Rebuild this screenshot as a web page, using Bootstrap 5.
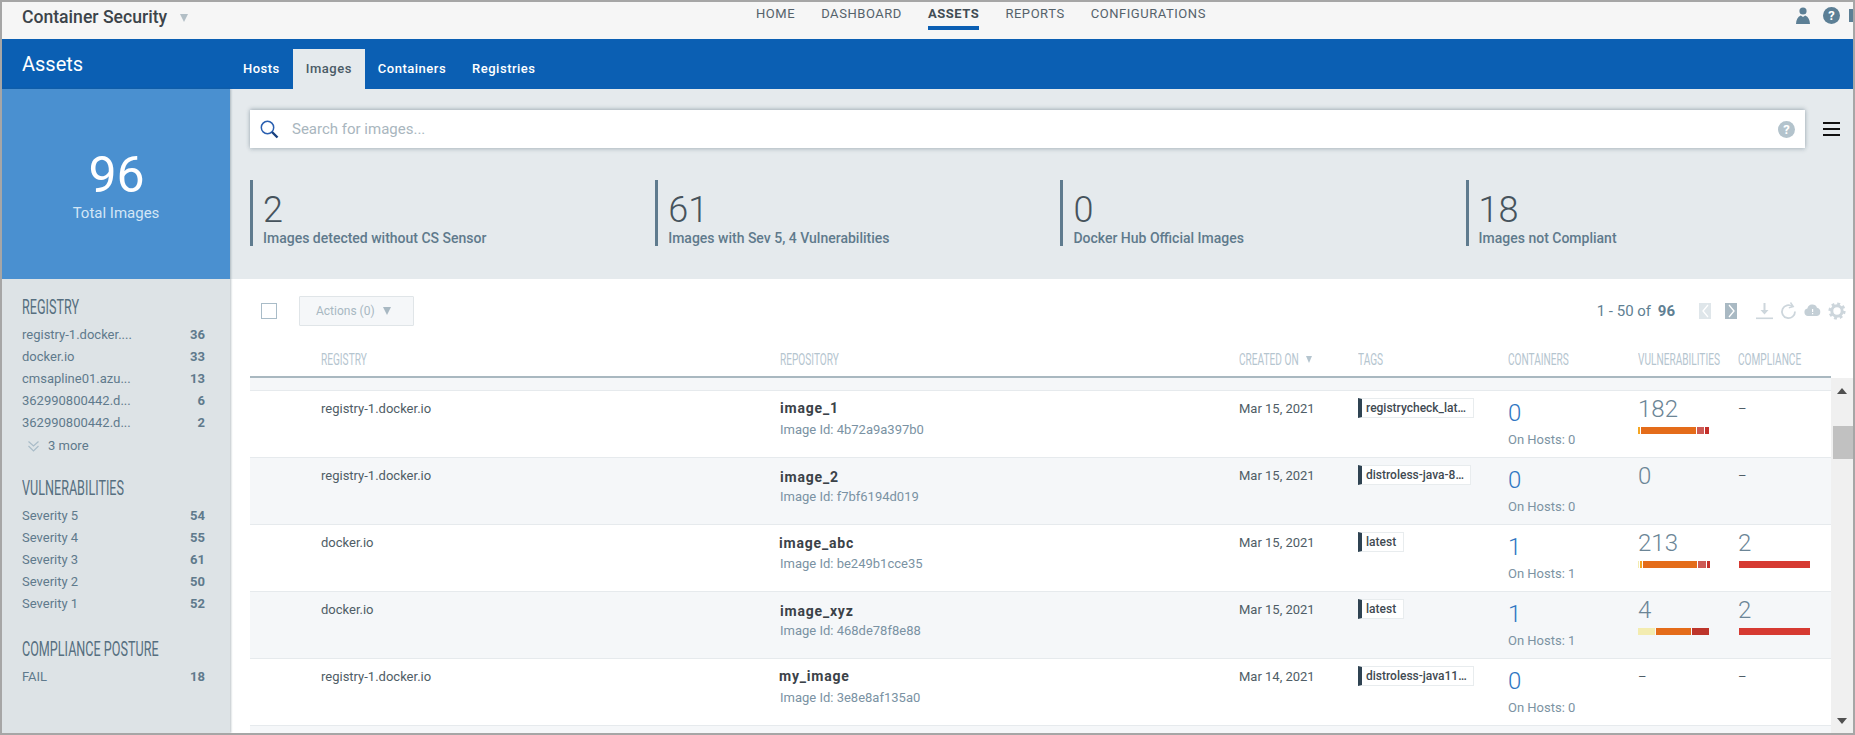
<!DOCTYPE html>
<html lang="en">
<head>
<meta charset="utf-8">
<title>Container Security - Assets</title>
<link href="https://cdn.jsdelivr.net/npm/bootstrap@5.3.0/dist/css/bootstrap.min.css" rel="stylesheet">
<style>
html,body{height:100%;margin:0;overflow:hidden}
body{font-family:Roboto,"Liberation Sans",sans-serif;font-size:13px;color:#4f5d66;background:#fff}
.cs-frame{width:1855px;height:735px;border:2px solid #a6a6a6;display:flex;flex-direction:column;overflow:hidden}
.cs-top{height:37px;background:#f6f6f6;flex:none;overflow:hidden}
.cs-title{width:754px;padding-left:20px;font-size:17.6px;font-weight:500;color:#3c444a;line-height:30px;flex:none}
.cs-caret{display:inline-block;width:0;height:0;border-left:4px solid transparent;border-right:4px solid transparent;border-top:8px solid #b3bfc6;vertical-align:middle}
.cs-title .cs-caret{margin-left:13px;margin-top:-1px}
.cs-mainnav{gap:26px}
.cs-mainnav .nav-link{padding:4px 0 0;height:28px;line-height:16px;font-size:13px;letter-spacing:.55px;color:#55626b;border-bottom:4px solid transparent}
.cs-mainnav .nav-link.active{font-weight:700;color:#414c54;border-bottom-color:#0b5fb3}
.cs-topicons{margin-left:auto;margin-right:-10px;gap:13px;padding-top:5px}
.cs-help{width:17px;height:17px;border-radius:50%;background:#5c7f95;color:#fff;font-size:13px;font-weight:700;line-height:17px;text-align:center;flex:none}
.cs-help-light{background:#b3c3cc}
.cs-box{width:14px;height:13px;background:#5c7f95;margin:2px 0 0 -4px;flex:none}
.cs-blue{height:50px;background:#0b5fb3;flex:none}
.cs-page{width:228px;padding-left:20px;font-size:20px;line-height:50px;color:#fff;flex:none}
.cs-tabs{margin-top:10px}
.cs-tabs .nav-link{height:40px;padding:12px 13px 0;font-size:13px;line-height:16px;font-weight:500;letter-spacing:.5px;color:#fff;border:0;border-radius:0;background:transparent}
.cs-tabs .nav-link.active{background:#e5eaed;color:#4a5b66}
.cs-body{flex:1;min-height:0}
.cs-side{width:228px;flex:none;display:flex;flex-direction:column;box-shadow:1px 0 2px rgba(60,80,95,.35);position:relative;z-index:2}
.cs-total{height:190px;flex:none;background:#4a90d0;color:#fff;text-align:center}
.cs-total-num{font-size:50px;line-height:58px;padding-top:57px;margin-left:1px}
.cs-total-label{font-size:15px;line-height:18px;color:#d3e6f6}
.cs-facets{flex:1;background:#dde3e6;padding:20px 25px 0 20px;color:#5f7a8c}
.cs-fh{height:16px;line-height:16px;font-size:20px;color:#566f80;white-space:nowrap;transform-origin:left center;transform:scaleX(.63);margin-bottom:9px}
.cs-fi{display:flex;justify-content:space-between;height:22px;line-height:22px;font-size:13px}
.cs-fi b{font-weight:700;color:#5f7a8c}
.cs-more{height:24px;line-height:24px;padding-left:6px;display:flex;align-items:center;gap:9px;margin-bottom:22px}
.cs-fgap{margin-top:26px}
.cs-main{flex:1;min-width:0;display:flex;flex-direction:column}
.cs-head{height:190px;flex:none;background:#e5eaed;padding:21px 0 0 20px}
.cs-search{width:1555px;height:38px;background:#fff;box-shadow:0 -1px 4px rgba(90,110,125,.45),0 2px 4px rgba(90,110,125,.2);padding:0 10px}
.cs-search input{border:0;outline:0;flex:1;font:15px Roboto,sans-serif;color:#4f5d66;background:transparent;padding:0;margin-left:13px}
.cs-search input::placeholder{color:#a9b6be;opacity:1}
.cs-burger{width:17px;margin-left:18px;display:flex;flex-direction:column;gap:4px}
.cs-burger span{display:block;height:2px;background:#111}
.cs-stats{margin-top:32px}
.cs-stat{width:405.2px;height:66px;flex:none}
.cs-stat-in{border-left:3px solid #5f7b8e;height:66px;padding:12px 0 0 10px}
.cs-stat-num{font-size:36px;line-height:36px;font-weight:300;color:#46535c}
.cs-stat-label{font-size:14px;line-height:20px;font-weight:500;color:#5f7a8c}
.cs-list{flex:1;min-height:0;display:flex;flex-direction:column;padding-left:20px}
.cs-tool{height:62px;flex:none;padding:17px 7px 0 11px}
.cs-check{width:16px;height:16px;border:1px solid #a9bcc8;margin-top:7px;background:#fff;flex:none;appearance:none;display:block}
.cs-actions{margin-left:22px;width:115px;height:30px;background:#f5f7f9;border:1px solid #e0e5e8;border-radius:1px;color:#a8b8c2;font-size:12px;line-height:28px;padding:0 0 0 16px;text-align:left}
.cs-actions .cs-caret{margin-left:8px;border-top-color:#a8b8c2;margin-top:-2px}
.cs-count{font-size:15px;line-height:30px;color:#5f7f93;margin-left:auto}
.cs-count b{font-weight:700;margin-left:3px}
.cs-pg{width:12px;height:16px;margin-top:7px;display:flex;align-items:center;justify-content:center;flex:none}
.cs-pg-off{background:#dfe6ea;margin-left:24px}
.cs-pg-on{background:#a9b9c3;margin-left:14px}
.cs-ticons{gap:7px;margin-left:19px;margin-top:6px}
table.cs-table{table-layout:fixed;width:1581px;margin:0;border-collapse:collapse;--bs-table-bg:transparent}
.cs-table td,.cs-table th{padding:0;border:0;vertical-align:top;box-shadow:none}
.cs-hdr{flex:none;border-bottom:2px solid #a9b8c0;width:1603px}
.cs-hdr th{height:36px;font-weight:400;line-height:16px;padding-top:10px!important}
.cs-th{display:block;font-size:17px;color:#b5c5cf;white-space:nowrap;transform-origin:left center;transform:scaleX(.595);height:16px}
.cs-sort{display:flex;height:16px}
.cs-sort .cs-th{width:67px;flex:none}
.cs-sort .cs-caret{margin-top:5px;border-top-color:#b5c5cf;border-left-width:3.5px;border-right-width:3.5px;border-top-width:7px}
.cs-scrollarea{flex:1;min-height:0;display:flex}
.cs-rows{flex:1;min-width:0;background:#f5f7f9;padding-top:12px;overflow:hidden}
.cs-rows tr{height:67px;background:#fff}
.cs-rows tr.cs-alt{background:#f5f7f9}
.cs-rows td{border-top:1px solid #e6eaed!important;height:67px}
.cs-rows tr:last-child td{border-bottom:1px solid #e6eaed!important}
.cs-plain{display:block;padding-top:10px;line-height:16px;font-size:13px;color:#4f5d66}
.cs-name{display:block;font-size:14px;font-weight:700;letter-spacing:.8px;line-height:16px;color:#3b4248;padding-top:9px}
.cs-name2{padding-top:11px}
.cs-name3{padding-top:10px;margin-left:-1px}
.cs-name5{margin-left:-1px}
.cs-id{position:relative;display:block;font-size:13px;line-height:16px;color:#7a92a3;margin-top:6px}
.cs-id-up{margin-top:4px}
.cs-id-mid{margin-top:5px}
.cs-tag{display:inline-flex;margin-top:7px;height:20px;border:1px solid #e8ecee;border-left:4px solid #2f4352;background:#fff;font-size:12px;font-weight:500;line-height:18px;color:#3f4a52;padding-left:4px;white-space:nowrap}
.cs-t116{width:116px}.cs-t113{width:113px}.cs-t46{width:46px}
.cs-cnum{display:block;font-size:24px;line-height:24px;font-weight:300;color:#2f76c2;padding-top:10px}
.cs-host{display:block;font-size:13px;line-height:16px;color:#7c93a3;margin-top:7px}
.cs-vnum{display:block;font-size:24px;line-height:24px;font-weight:300;color:#6b8596;padding-top:6px}
.cs-dash{display:block;font-size:13px;line-height:16px;color:#4f5d66;padding-top:10px}
.cs-bar{display:flex;gap:1px;height:7px;width:71px;margin-top:6px}
.cs-bar i{display:block;height:7px;flex:none}
.s-c{background:#f3ecb0}.s-y{background:#f5a623}.s-o{background:#e46c1a}.s-p{background:#cd5a55}.s-r{background:#c4302b}.s-d{background:#bd352b}
.cs-fail{background:#d63a32;width:71px;margin-left:1px}
.cs-scroll{width:22px;flex:none;background:#f0f0f0;display:flex;flex-direction:column;align-items:center;position:relative}
.cs-thumb{position:absolute;top:48px;left:2px;width:20px;height:33px;background:#c1c1c1}
.cs-up,.cs-down{width:0;height:0;border-left:5.5px solid transparent;border-right:5.5px solid transparent}
.cs-up{border-bottom:6px solid #505050;margin-top:10px}
.cs-down{border-top:6px solid #505050;position:absolute;top:340px}
</style>
</head>
<body>
<div class="cs-frame">
  <header class="cs-top d-flex">
    <div class="cs-title">Container Security<span class="cs-caret"></span></div>
    <nav class="nav cs-mainnav flex-nowrap">
      <a class="nav-link" href="#">HOME</a>
      <a class="nav-link" href="#">DASHBOARD</a>
      <a class="nav-link active" href="#">ASSETS</a>
      <a class="nav-link" href="#">REPORTS</a>
      <a class="nav-link" href="#">CONFIGURATIONS</a>
    </nav>
    <div class="cs-topicons d-flex">
      <svg width="14" height="17" viewBox="0 0 14 17" fill="#5c7f95"><circle cx="7" cy="4" r="3.6"/><path d="M0 17c.3-4 1.5-7 4.8-8.4L7 10l2.2-1.4C12.500 10 13.700 13 14 17z"/></svg>
      <div class="cs-help">?</div>
      <div class="cs-box"></div>
    </div>
  </header>
  <div class="cs-blue d-flex">
    <div class="cs-page">Assets</div>
    <nav class="nav cs-tabs flex-nowrap">
      <a class="nav-link" href="#">Hosts</a>
      <a class="nav-link active" href="#">Images</a>
      <a class="nav-link" href="#">Containers</a>
      <a class="nav-link" href="#">Registries</a>
    </nav>
  </div>
  <div class="cs-body d-flex">
    <aside class="cs-side">
      <div class="cs-total">
        <div class="cs-total-num">96</div>
        <div class="cs-total-label">Total Images</div>
      </div>
      <div class="cs-facets">
        <div class="cs-fh">REGISTRY</div>
        <div class="cs-fi"><span>registry-1.docker....</span><b>36</b></div>
        <div class="cs-fi"><span>docker.io</span><b>33</b></div>
        <div class="cs-fi"><span>cmsapline01.azu...</span><b>13</b></div>
        <div class="cs-fi"><span>362990800442.d...</span><b>6</b></div>
        <div class="cs-fi"><span>362990800442.d...</span><b>2</b></div>
        <div class="cs-more">
          <svg width="11" height="11" viewBox="0 0 11 11" fill="none" stroke="#a9bcc8" stroke-width="1.200"><path d="M.5 .5l5 4.500 5-4.500M.5 5l5 5 5-5"/></svg>
          <span>3 more</span>
        </div>
        <div class="cs-fh">VULNERABILITIES</div>
        <div class="cs-fi"><span>Severity 5</span><b>54</b></div>
        <div class="cs-fi"><span>Severity 4</span><b>55</b></div>
        <div class="cs-fi"><span>Severity 3</span><b>61</b></div>
        <div class="cs-fi"><span>Severity 2</span><b>50</b></div>
        <div class="cs-fi"><span>Severity 1</span><b>52</b></div>
        <div class="cs-fh cs-fgap">COMPLIANCE POSTURE</div>
        <div class="cs-fi"><span>FAIL</span><b>18</b></div>
      </div>
    </aside>
    <main class="cs-main">
      <section class="cs-head">
        <div class="d-flex align-items-center">
          <div class="cs-search d-flex align-items-center">
            <svg width="19" height="19" viewBox="0 0 19 19" fill="none"><circle cx="7.500" cy="7.500" r="6.200" stroke="#2a5fb0" stroke-width="1.500"/><path d="M12 12l5.500 5.500" stroke="#17407f" stroke-width="2.400"/></svg>
            <input type="text" placeholder="Search for images..." aria-label="Search for images">
            <div class="cs-help cs-help-light">?</div>
          </div>
          <div class="cs-burger"><span></span><span></span><span></span></div>
        </div>
        <div class="cs-stats d-flex">
          <div class="cs-stat"><div class="cs-stat-in"><div class="cs-stat-num">2</div><div class="cs-stat-label">Images detected without CS Sensor</div></div></div>
          <div class="cs-stat"><div class="cs-stat-in"><div class="cs-stat-num">61</div><div class="cs-stat-label">Images with Sev 5, 4 Vulnerabilities</div></div></div>
          <div class="cs-stat"><div class="cs-stat-in"><div class="cs-stat-num">0</div><div class="cs-stat-label">Docker Hub Official Images</div></div></div>
          <div class="cs-stat"><div class="cs-stat-in"><div class="cs-stat-num">18</div><div class="cs-stat-label">Images not Compliant</div></div></div>
        </div>
      </section>
      <section class="cs-list">
        <div class="cs-tool d-flex">
          <input class="cs-check" type="checkbox" aria-label="Select all">
          <button class="cs-actions" type="button">Actions (0)<span class="cs-caret"></span></button>
          <div class="cs-count">1 - 50 of <b>96</b></div>
          <div class="cs-pg cs-pg-off"><svg width="7" height="14" viewBox="0 0 7 14" fill="none" stroke="#fff" stroke-width="1.300"><path d="M6 1L1 7l5 6"/></svg></div>
          <div class="cs-pg cs-pg-on"><svg width="7" height="14" viewBox="0 0 7 14" fill="none" stroke="#fff" stroke-width="1.300"><path d="M1 1l5 6-5 6"/></svg></div>
          <div class="cs-ticons d-flex">
            <svg width="17" height="18" viewBox="0 0 17 18" fill="#cdd6dc"><path d="M7.500 1h2v7h3l-4 4.500-4-4.500h3z"/><rect y="15.500" width="17" height="1.600"/></svg>
            <svg width="17" height="18" viewBox="0 0 17 18" fill="none" stroke="#cdd6dc" stroke-width="1.800"><path d="M12.500 4.500A6.500 6.500 0 1 0 15 9.500"/><path d="M10.500 .5l2.800 4-4.500 1.300" stroke-width="1.400"/></svg>
            <svg width="17" height="18" viewBox="0 0 17 18"><path fill="#c4cfd6" d="M4 14a3.800 3.800 0 0 1-.6-7.500A5 5 0 0 1 13 5.800 4.200 4.200 0 0 1 13 14z"/><path fill="#fff" d="M8 7h1.200v3H8zM8 11h1.200v1.200H8z"/></svg>
            <svg width="18" height="18" viewBox="0 0 18 18" fill="none" stroke="#cdd6dc"><circle cx="9" cy="9" r="5.200" stroke-width="3"/><circle cx="9" cy="9" r="7.300" stroke-width="2.600" stroke-dasharray="2.900 2.830"/></svg>
          </div>
        </div>
        <table class="table cs-table cs-hdr">
          <colgroup><col style="width:71px"><col style="width:459px"><col style="width:459px"><col style="width:119px"><col style="width:150px"><col style="width:130px"><col style="width:100px"><col></colgroup>
          <thead><tr>
            <th></th>
            <th><span class="cs-th">REGISTRY</span></th>
            <th><span class="cs-th">REPOSITORY</span></th>
            <th><div class="cs-sort"><span class="cs-th">CREATED ON</span><span class="cs-caret"></span></div></th>
            <th><span class="cs-th">TAGS</span></th>
            <th><span class="cs-th">CONTAINERS</span></th>
            <th><span class="cs-th">VULNERABILITIES</span></th>
            <th><span class="cs-th">COMPLIANCE</span></th>
          </tr></thead>
        </table>
        <div class="cs-scrollarea">
          <div class="cs-rows">
            <table class="table cs-table">
              <colgroup><col style="width:71px"><col style="width:459px"><col style="width:459px"><col style="width:119px"><col style="width:150px"><col style="width:130px"><col style="width:100px"><col></colgroup>
              <tbody>
                <tr>
                  <td></td>
                  <td><span class="cs-plain">registry-1.docker.io</span></td>
                  <td><span class="cs-name">image_1</span><span class="cs-id">Image Id: 4b72a9a397b0</span></td>
                  <td><span class="cs-plain">Mar 15, 2021</span></td>
                  <td><span class="cs-tag cs-t116">registrycheck_lat…</span></td>
                  <td><span class="cs-cnum">0</span><span class="cs-host">On Hosts: 0</span></td>
                  <td><span class="cs-vnum">182</span><div class="cs-bar"><i class="s-y" style="width:2px"></i><i class="s-o" style="width:55px"></i><i class="s-p" style="width:7px"></i><i class="s-r" style="width:4px"></i></div></td>
                  <td><span class="cs-dash">–</span></td>
                </tr>
                <tr class="cs-alt">
                  <td></td>
                  <td><span class="cs-plain">registry-1.docker.io</span></td>
                  <td><span class="cs-name cs-name2">image_2</span><span class="cs-id cs-id-up">Image Id: f7bf6194d019</span></td>
                  <td><span class="cs-plain">Mar 15, 2021</span></td>
                  <td><span class="cs-tag cs-t113">distroless-java-8…</span></td>
                  <td><span class="cs-cnum">0</span><span class="cs-host">On Hosts: 0</span></td>
                  <td><span class="cs-vnum">0</span></td>
                  <td><span class="cs-dash">–</span></td>
                </tr>
                <tr>
                  <td></td>
                  <td><span class="cs-plain">docker.io</span></td>
                  <td><span class="cs-name cs-name3">image_abc</span><span class="cs-id cs-id-mid">Image Id: be249b1cce35</span></td>
                  <td><span class="cs-plain">Mar 15, 2021</span></td>
                  <td><span class="cs-tag cs-t46">latest</span></td>
                  <td><span class="cs-cnum">1</span><span class="cs-host">On Hosts: 1</span></td>
                  <td><span class="cs-vnum">213</span><div class="cs-bar"><i class="s-c" style="width:1px"></i><i class="s-y" style="width:2px"></i><i class="s-o" style="width:54px"></i><i class="s-p" style="width:8px"></i><i class="s-r" style="width:3px"></i></div></td>
                  <td><span class="cs-vnum">2</span><div class="cs-bar cs-fail"></div></td>
                </tr>
                <tr class="cs-alt">
                  <td></td>
                  <td><span class="cs-plain">docker.io</span></td>
                  <td><span class="cs-name cs-name2">image_xyz</span><span class="cs-id cs-id-up">Image Id: 468de78f8e88</span></td>
                  <td><span class="cs-plain">Mar 15, 2021</span></td>
                  <td><span class="cs-tag cs-t46">latest</span></td>
                  <td><span class="cs-cnum">1</span><span class="cs-host">On Hosts: 1</span></td>
                  <td><span class="cs-vnum">4</span><div class="cs-bar"><i class="s-c" style="width:17px"></i><i class="s-o" style="width:35px"></i><i class="s-d" style="width:17px"></i></div></td>
                  <td><span class="cs-vnum">2</span><div class="cs-bar cs-fail"></div></td>
                </tr>
                <tr>
                  <td></td>
                  <td><span class="cs-plain">registry-1.docker.io</span></td>
                  <td><span class="cs-name cs-name5">my_image</span><span class="cs-id">Image Id: 3e8e8af135a0</span></td>
                  <td><span class="cs-plain">Mar 14, 2021</span></td>
                  <td><span class="cs-tag cs-t116">distroless-java11…</span></td>
                  <td><span class="cs-cnum">0</span><span class="cs-host">On Hosts: 0</span></td>
                  <td><span class="cs-dash">–</span></td>
                  <td><span class="cs-dash">–</span></td>
                </tr>
              </tbody>
            </table>
          </div>
          <div class="cs-scroll"><div class="cs-up"></div><div class="cs-thumb"></div><div class="cs-down"></div></div>
        </div>
      </section>
    </main>
  </div>
</div>
<script src="https://cdn.jsdelivr.net/npm/bootstrap@5.3.0/dist/js/bootstrap.bundle.min.js"></script>
</body>
</html>
